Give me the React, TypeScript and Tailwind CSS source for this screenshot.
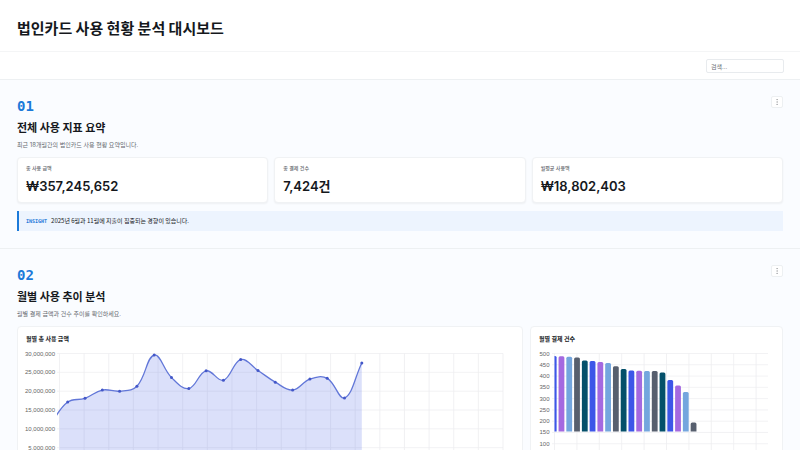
import React from "react";
import { MoreVertical } from "lucide-react";

interface Point {
  x: number;
  y: number;
}

const metrics = [
  { label: "총 사용 금액", value: "₩357,245,652" },
  { label: "총 결제 건수", value: "7,424건" },
  { label: "월평균 사용액", value: "₩18,802,403" },
];

// monthly spend, in units of 1,000,000
const spend = [11.2, 17.1, 18.1, 20.3, 20.0, 21.3, 29.6, 23.6, 20.7, 25.4, 22.9, 28.4, 25.5, 22.4, 20.3, 23.2, 23.4, 18.2, 27.5];

const counts = [489, 488, 486, 482, 469, 467, 462, 458, 444, 431, 425, 423, 422, 422, 416, 383, 358, 329, 194];

const barColors = ["#3d56e8", "#a469e0", "#74a6de", "#575f6e", "#04506a"];

function splinePath(pts: Point[], tension = 0.4) {
  let d = `M${pts[0].x},${pts[0].y}`;
  const ctrl = pts.map((p, i) => {
    const prev = pts[i - 1] || p;
    const next = pts[i + 1] || p;
    const d01 = Math.hypot(p.x - prev.x, p.y - prev.y);
    const d12 = Math.hypot(next.x - p.x, next.y - p.y);
    const fa = (tension * d01) / (d01 + d12);
    const fb = (tension * d12) / (d01 + d12);
    return {
      before: { x: p.x - fa * (next.x - prev.x), y: p.y - fa * (next.y - prev.y) },
      after: { x: p.x + fb * (next.x - prev.x), y: p.y + fb * (next.y - prev.y) },
    };
  });
  for (let i = 1; i < pts.length; i++) {
    const a = ctrl[i - 1].after;
    const b = ctrl[i].before;
    d += ` C${a.x},${a.y} ${b.x},${b.y} ${pts[i].x},${pts[i].y}`;
  }
  return d;
}

const SpendChart: React.FC = () => {
  const left = 33.5;
  const right = 477;
  const top = 5.5;
  const bottom = 118.5;
  const pts = spend.map((v, i) => ({ x: 24.4 + i * 17.3, y: bottom - (v / 30) * (bottom - top) }));
  const line = splinePath(pts);
  const ticks = [30, 25, 20, 15, 10, 5, 0];

  return (
    <svg viewBox="0 0 488 140" className="block w-full overflow-visible" role="img" aria-label="월별 총 사용 금액">
      <defs>
        <clipPath id="spend-line">
          <rect x="31" y="0" width="457" height="120" />
        </clipPath>
        <clipPath id="spend-area">
          <rect x={left} y="0" width="455" height="120" />
        </clipPath>
      </defs>
      {ticks.map((t, i) => (
        <g key={t}>
          <line x1="31" x2={right} y1={top + i * 18.83} y2={top + i * 18.83} stroke="#efeff1" strokeWidth="0.8" />
          <text
            x="29"
            y={top + i * 18.83 + 2}
            textAnchor="end"
            className="fill-[#666] font-['Liberation_Sans',sans-serif] text-[6px]"
          >
            {(t * 1000000).toLocaleString("en-US")}
          </text>
        </g>
      ))}
      {Array.from({ length: 19 }, (_, i) => (
        <line key={i} x1={left + i * 24.64} x2={left + i * 24.64} y1={top} y2={bottom + 3} stroke="#ededf0" strokeWidth="0.8" />
      ))}
      <path
        d={`${line} L${pts[18].x},${bottom} L${pts[0].x},${bottom} Z`}
        fill="#4a63e7"
        fillOpacity="0.2"
        clipPath="url(#spend-area)"
      />
      <path d={line} fill="none" stroke="#6277d8" strokeWidth="1.3" clipPath="url(#spend-line)" />
      {pts.slice(1).map((p) => (
        <circle key={p.x} cx={p.x} cy={p.y} r="1.5" fill="#4357c8" />
      ))}
    </svg>
  );
};

const CountChart: React.FC = () => {
  const top = 5.5;
  const ticks = [500, 450, 400, 350, 300, 250, 200, 150, 100, 50, 0];

  return (
    <svg viewBox="0 0 235 140" className="block w-full overflow-visible" role="img" aria-label="월별 결제 건수">
      <defs>
        <clipPath id="count-bars">
          <rect x="15.5" y="0" width="216" height="140" />
        </clipPath>
      </defs>
      {ticks.map((t, i) => (
        <g key={t}>
          <line x1="13" x2="229" y1={top + i * 11.28} y2={top + i * 11.28} stroke="#efeff1" strokeWidth="0.8" />
          <text
            x="10.5"
            y={top + i * 11.28 + 2}
            textAnchor="end"
            className="fill-[#666] font-['Liberation_Sans',sans-serif] text-[6px]"
          >
            {t}
          </text>
        </g>
      ))}
      {Array.from({ length: 10 }, (_, i) => (
        <line key={i} x1={15.5 + i * 22.4} x2={15.5 + i * 22.4} y1={top} y2="121" stroke="#ededf0" strokeWidth="0.8" />
      ))}
      <g clipPath="url(#count-bars)">
        {counts.map((v, i) => {
          const x = 11.8 + i * 7.77;
          const y = top + (500 - v) * 0.2256;
          return (
            <path
              key={i}
              d={`M${x},83.5 V${y + 1.5} Q${x},${y} ${x + 1.5},${y} H${x + 4.3} Q${x + 5.8},${y} ${x + 5.8},${y + 1.5} V83.5 Z`}
              fill={barColors[i % 5]}
            />
          );
        })}
      </g>
    </svg>
  );
};

interface SectionProps {
  number: string;
  title: string;
  description: string;
  children: React.ReactNode;
}

const Section: React.FC<SectionProps> = ({ number, title, description, children }) => (
  <section className="border-b border-[#edf0f2] px-[17px] py-4">
    <div className="flex items-start justify-between">
      <div>
        <p className="font-['DejaVu_Sans_Mono',monospace] text-sm leading-5 font-bold text-[#1c7ad9]">{number}</p>
        <h2 className="mt-[3px] font-['Noto_Sans_CJK_KR',sans-serif] text-[11px] leading-4 font-semibold text-[#15181c]">{title}</h2>
        <p className="mt-1 text-[6px] leading-3 text-[#666a70]">{description}</p>
      </div>
      <button
        type="button"
        aria-label="메뉴"
        className="flex size-3 items-center justify-center rounded-[2px] border border-[#edf0f2] bg-white text-[#666a70]"
      >
        <MoreVertical size={8} strokeWidth={1} />
      </button>
    </div>
    {children}
  </section>
);

export default function App() {
  return (
    <div className="min-h-screen bg-[#fafcff] font-[Inter,'Noto_Sans_CJK_KR',sans-serif] text-[#15181c]">
      <header className="border-b border-[#f4f5f6] bg-white px-[17px] pt-[18px] pb-[13px]">
        <h1 className="font-['Noto_Sans_CJK_KR',sans-serif] text-[15px] leading-5 font-semibold">법인카드 사용 현황 분석 대시보드</h1>
      </header>
      <div className="flex justify-end border-b border-[#edf0f2] bg-white px-4 pt-[7px] pb-1.5">
        <input
          type="search"
          aria-label="검색"
          placeholder="검색..."
          className="h-3.5 w-[78px] rounded-[2px] border border-[#e8ebee] bg-white px-1 text-[6px] placeholder:text-[#666a70]"
        />
      </div>

      <main>
        <Section number="01" title="전체 사용 지표 요약" description="최근 18개월간의 법인카드 사용 현황 요약입니다.">
          <div className="mt-1.5 grid grid-cols-3 gap-1.5">
            {metrics.map((m) => (
              <div key={m.label} className="rounded-[4px] border border-[#f0f2f4] bg-white px-2 py-1.5 shadow-xs">
                <p className="text-[5px] leading-2 font-medium text-[#666a70]">{m.label}</p>
                <p className="mt-1 text-[13px] leading-5 font-semibold">{m.value}</p>
              </div>
            ))}
          </div>
          <div className="mt-2 mb-px flex h-5 items-center gap-1 border-l-2 border-[#1c7ad9] bg-[#edf4fe] px-[7px]">
            <span className="font-['DejaVu_Sans_Mono',monospace] text-[5px] leading-none font-bold text-[#1c7ad9]">INSIGHT</span>
            <p className="font-['Noto_Sans_CJK_KR',sans-serif] text-[6px] leading-2">2025년 6월과 11월에 지출이 집중되는 경향이 있습니다.</p>
          </div>
        </Section>

        <Section number="02" title="월별 사용 추이 분석" description="월별 결제 금액과 건수 추이를 확인하세요.">
          <div className="mt-1.5 grid grid-cols-[2fr_1fr] gap-[7px]">
            <div className="rounded-[4px] border border-[#f0f2f4] bg-white p-2">
              <h3 className="mb-[5px] text-[6px] leading-2 font-bold">월별 총 사용 금액</h3>
              <SpendChart />
            </div>
            <div className="rounded-[4px] border border-[#f0f2f4] bg-white p-2">
              <h3 className="mb-[5px] text-[6px] leading-2 font-bold">월별 결제 건수</h3>
              <CountChart />
            </div>
          </div>
        </Section>
      </main>
    </div>
  );
}
